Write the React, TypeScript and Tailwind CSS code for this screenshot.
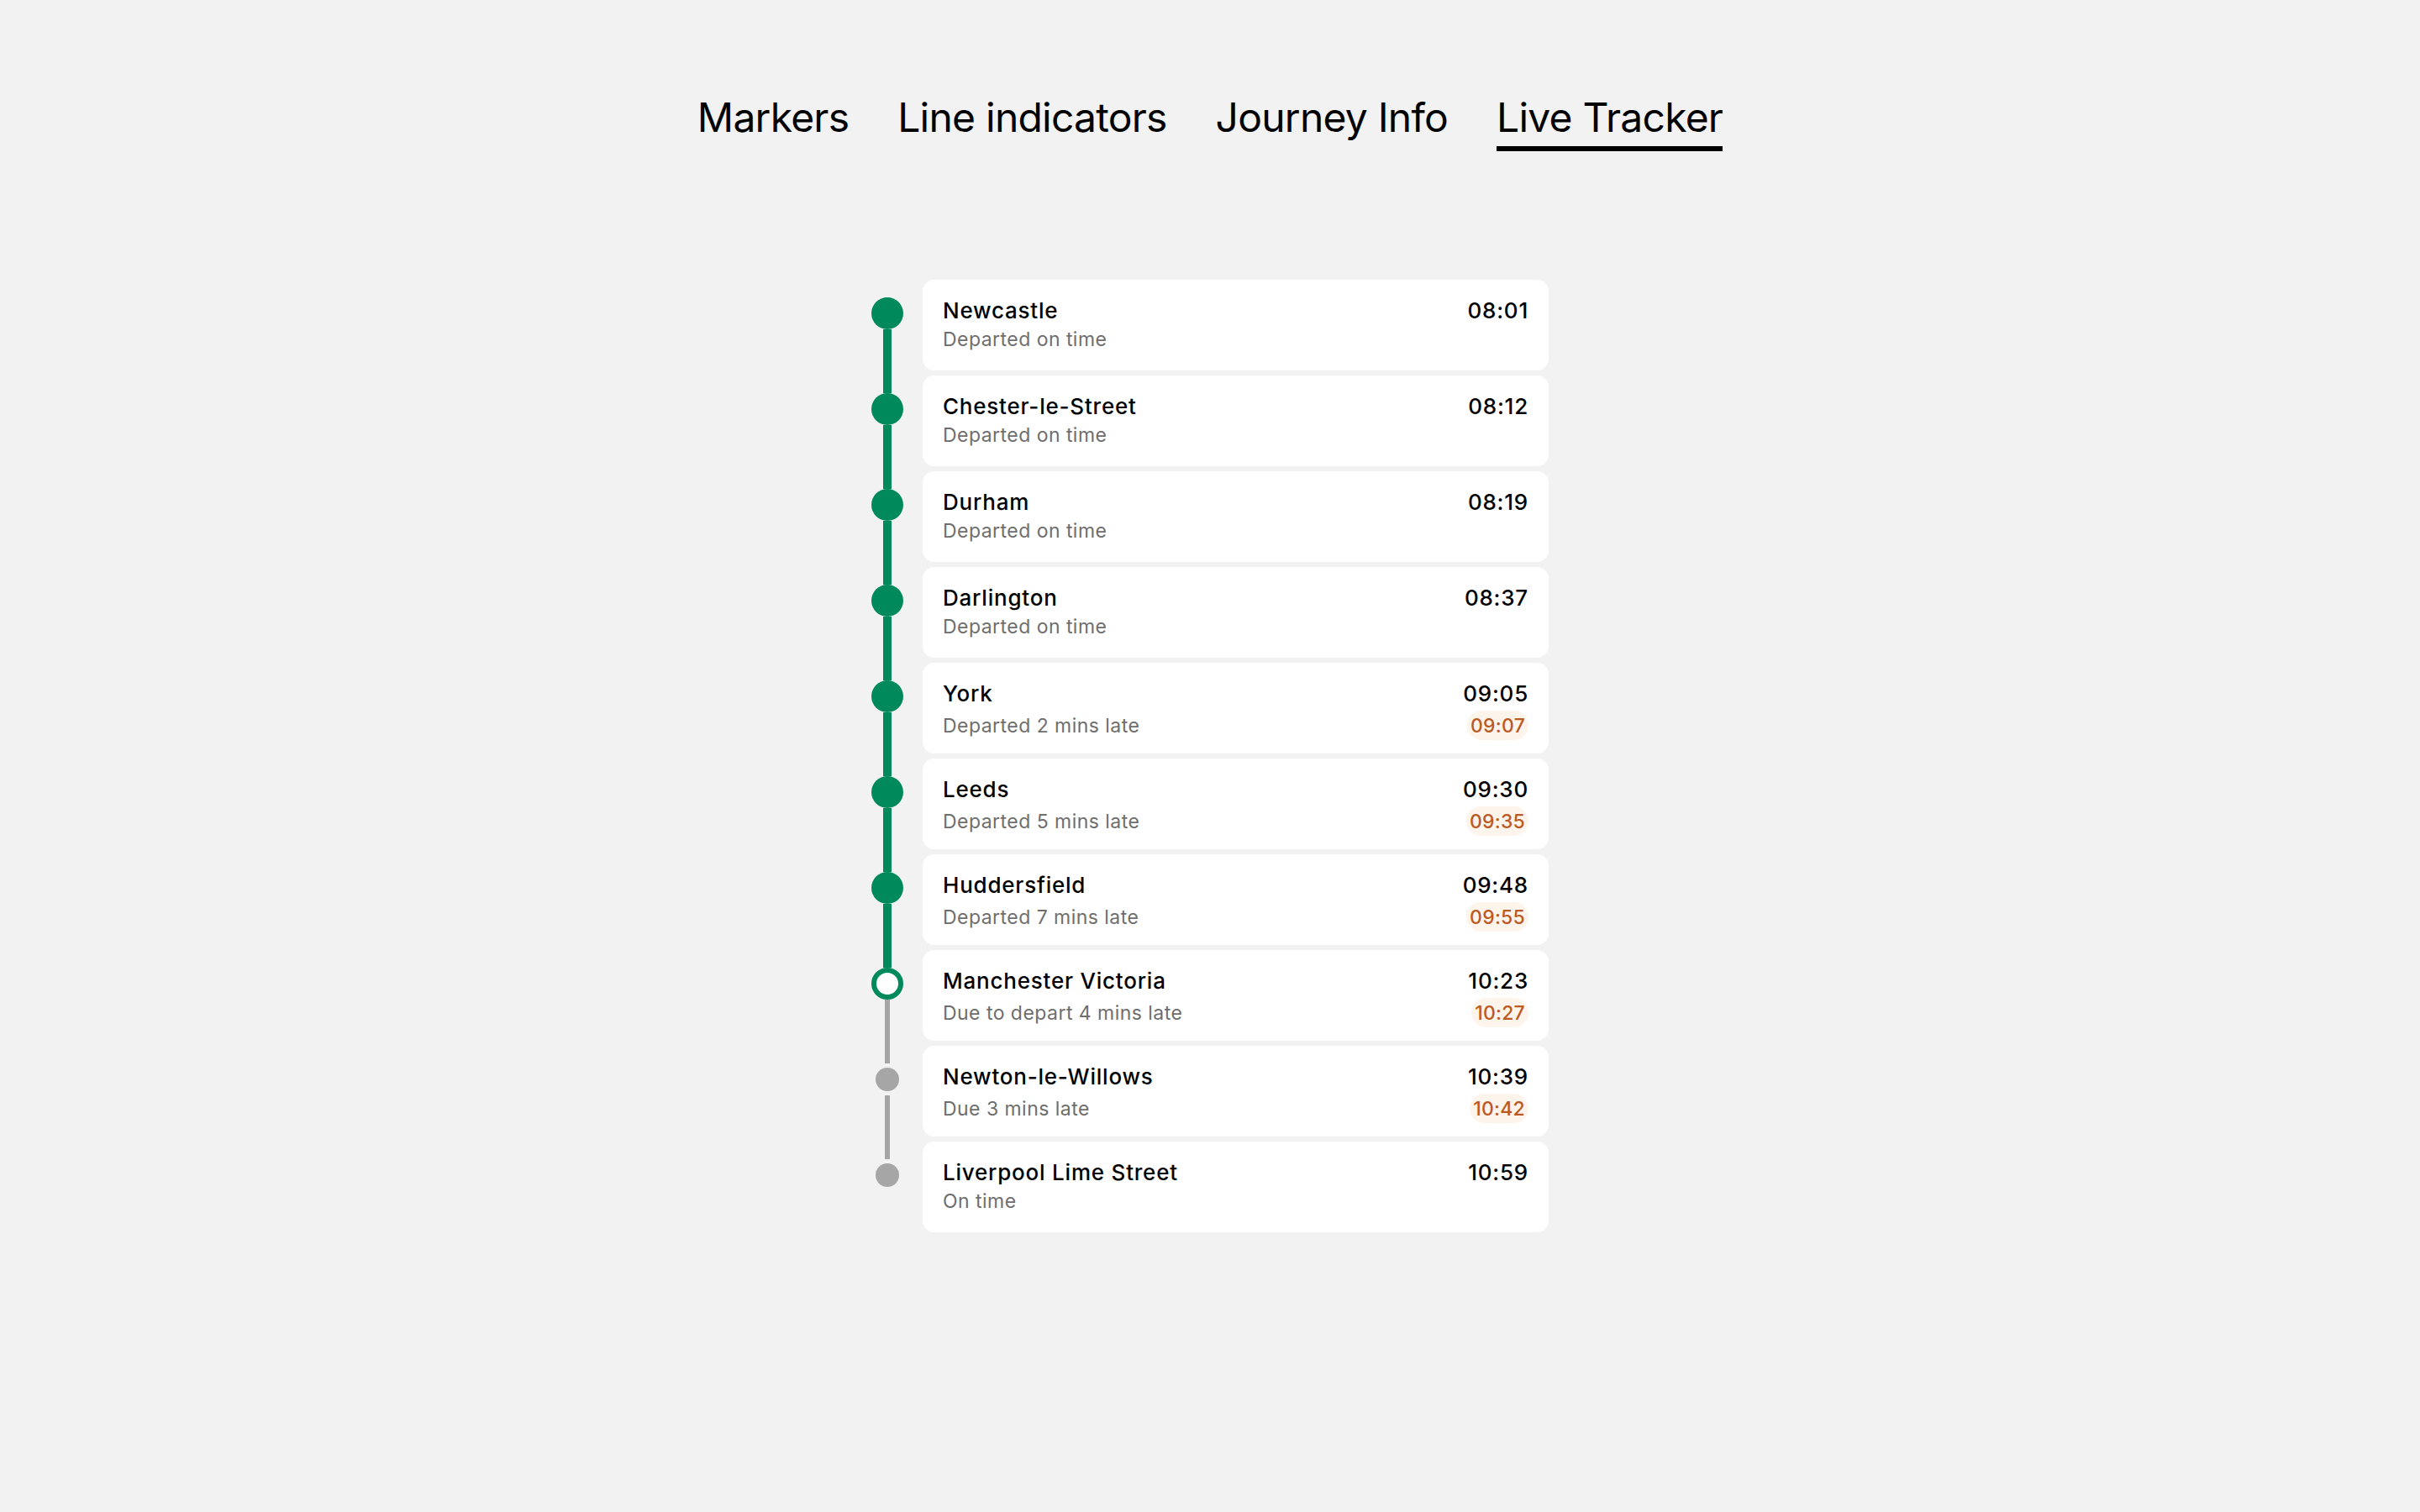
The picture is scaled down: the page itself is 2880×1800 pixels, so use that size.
import React from "react";

type Status = "done" | "current" | "future";
type Stop = { name: string; sub: string; time: string; late?: string; status: Status };

const stops: Stop[] = [
  { name: "Newcastle", sub: "Departed on time", time: "08:01", status: "done" },
  { name: "Chester-le-Street", sub: "Departed on time", time: "08:12", status: "done" },
  { name: "Durham", sub: "Departed on time", time: "08:19", status: "done" },
  { name: "Darlington", sub: "Departed on time", time: "08:37", status: "done" },
  { name: "York", sub: "Departed 2 mins late", time: "09:05", late: "09:07", status: "done" },
  { name: "Leeds", sub: "Departed 5 mins late", time: "09:30", late: "09:35", status: "done" },
  { name: "Huddersfield", sub: "Departed 7 mins late", time: "09:48", late: "09:55", status: "done" },
  { name: "Manchester Victoria", sub: "Due to depart 4 mins late", time: "10:23", late: "10:27", status: "current" },
  { name: "Newton-le-Willows", sub: "Due 3 mins late", time: "10:39", late: "10:42", status: "future" },
  { name: "Liverpool Lime Street", sub: "On time", time: "10:59", status: "future" },
];

const tabs = ["Markers", "Line indicators", "Journey Info", "Live Tracker"];

function Segment({ kind, grow }: { kind: "green" | "grey" | "none"; grow?: boolean }) {
  const base = grow ? "flex-1" : "h-[21px]";
  if (kind === "none") return <div className={base} />;
  return (
    <div className={`${base} flex justify-center`}>
      <div className={kind === "green" ? "w-[10px] bg-[#008a5b]" : "w-[6px] bg-[#a6a6a6]"} />
    </div>
  );
}

function Dot({ status }: { status: Status }) {
  if (status === "done")
    return <div className="h-[38px] w-[38px] rounded-full bg-[#008a5b]" />;
  if (status === "current")
    return <div className="h-[38px] w-[38px] rounded-full border-[6px] border-[#008a5b] bg-white" />;
  return (
    <div className="flex h-[38px] w-[38px] items-center justify-center">
      <div className="h-[28px] w-[28px] rounded-full bg-[#a6a6a6]" />
    </div>
  );
}

export default function App() {
  return (
    <div
      className="min-h-screen bg-[#f2f2f2] text-black"
      style={{ fontFamily: "Inter, 'Liberation Sans', sans-serif" }}
    >
      <div className="flex justify-center gap-[58px] pt-[116px]">
        {tabs.map((t) => (
          <div
            key={t}
            className={`pb-[10px] text-[48px] leading-[48px] font-normal tracking-[-0.016em] border-b-[6px] ${
              t === "Live Tracker" ? "border-black" : "border-transparent"
            }`}
          >
            {t}
          </div>
        ))}
      </div>

      <div className="mx-auto mt-[153px] flex w-[806px] flex-col">
        {stops.map((s, i) => {
          const next = stops[i + 1];
          const topKind: "green" | "grey" | "none" =
            i === 0 ? "none" : s.status === "future" ? "grey" : "green";
          const bottomKind: "green" | "grey" | "none" = !next
            ? "none"
            : next.status === "future"
            ? "grey"
            : "green";
          return (
            <div key={s.name} className="flex gap-[23px]">
              <div className="flex w-[38px] flex-col">
                <Segment kind={topKind} />
                <Dot status={s.status} />
                <Segment kind={bottomKind} grow />
              </div>
              <div className={`flex-1 ${next ? "pb-[6px]" : ""}`}>
                <div className="flex h-[108px] flex-col rounded-[14px] bg-white px-6 pt-[21px]">
                  <div className="flex items-center justify-between text-[26px] leading-[32px] font-medium tracking-[0.03em]">
                    <span>{s.name}</span>
                    <span>{s.time}</span>
                  </div>
                  <div className="mt-1 flex items-center justify-between text-[23px] leading-[28px] text-[#6e6e6e] tracking-[0.02em]">
                    <span>{s.sub}</span>
                    {s.late && (
                      <span className="flex h-[35px] items-center rounded-full bg-[#fdf5ec] px-[4px] font-medium tracking-[0.01em] text-[#bb5a24]">
                        {s.late}
                      </span>
                    )}
                  </div>
                </div>
              </div>
            </div>
          );
        })}
      </div>
    </div>
  );
}
